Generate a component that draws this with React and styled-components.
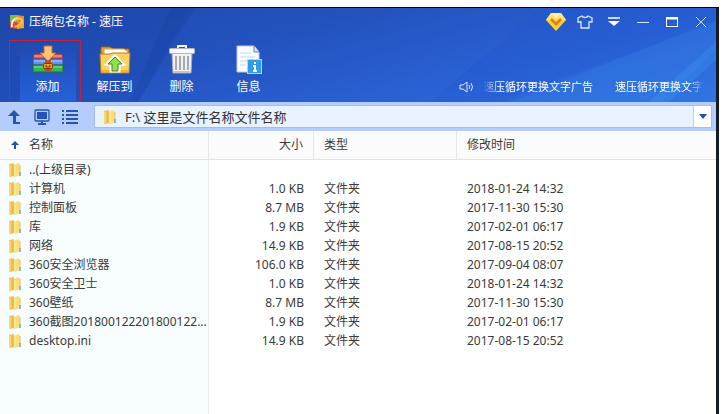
import styled, { createGlobalStyle } from "styled-components";

const files = [
  { name: "..(上级目录)" },
  { name: "计算机", size: "1.0 KB", type: "文件夹", date: "2018-01-24 14:32" },
  { name: "控制面板", size: "8.7 MB", type: "文件夹", date: "2017-11-30 15:30" },
  { name: "库", size: "1.9 KB", type: "文件夹", date: "2017-02-01 06:17" },
  { name: "网络", size: "14.9 KB", type: "文件夹", date: "2017-08-15 20:52" },
  { name: "360安全浏览器", size: "106.0 KB", type: "文件夹", date: "2017-09-04 08:07" },
  { name: "360安全卫士", size: "1.0 KB", type: "文件夹", date: "2018-01-24 14:32" },
  { name: "360壁纸", size: "8.7 MB", type: "文件夹", date: "2017-11-30 15:30" },
  { name: "360截图201800122201800122...", size: "1.9 KB", type: "文件夹", date: "2017-02-01 06:17" },
  { name: "desktop.ini", size: "14.9 KB", type: "文件夹", date: "2017-08-15 20:52" },
];

const AppLogo = () => (
  <svg width="16" height="16" viewBox="0 0 16 16">
    <path d="M1 1h7v7H1z" fill="#7fbf3c" />
    <path d="M8 1l7 1v6H8z" fill="#f08a24" />
    <path d="M1 8h7v7l-7-1z" fill="#e2502b" />
    <path d="M8 8h7v6l-7 1z" fill="#f4a92c" />
    <path d="M3 13c-1-5 1-8 6-9" fill="none" stroke="#e6f5f5" strokeWidth="2" />
    <path d="M6 6c4-3 8-1 7 2s-4 3-7 5" fill="none" stroke="#ffc65a" strokeWidth="2" />
    <path d="M6 8l4 1-3 3z" fill="#e2502b" />
  </svg>
);

const AddIcon = () => (
  <svg width="32" height="30" viewBox="0 0 32 30">
    <path d="M2 9h28l1 5H1z" fill="#e3564a" stroke="#a33443" />
    <path d="M1 14h30v6H1z" fill="#5f92f2" stroke="#2e54b0" />
    <path d="M1 20h30v7H1z" fill="#39b54c" stroke="#1a7434" />
    <path d="M2 11h28M2 16h28M2 22h28" stroke="#fff" strokeOpacity=".5" />
    <path d="M13 14h6v13h-6z" fill="#b4521a" />
    <rect x="11.500" y="18.500" width="9" height="5" rx="1" fill="#f09a2c" stroke="#87380d" />
    <path d="M14 20v2h4v-2" fill="none" stroke="#87380d" />
    <path d="M12 1h8v7h4l-8 8-8-8h4z" fill="#ffc477" stroke="#c76a2a" />
  </svg>
);

const ExtractIcon = () => (
  <svg width="32" height="30" viewBox="0 0 32 30">
    <path d="M2 8V2h9l3 2h16v7H2z" fill="#f0a420" stroke="#a5630f" />
    <path d="M5 4h20l4 3v4H5z" fill="#fff" stroke="#c9a25c" />
    <path d="M1 9h10l3-1h17l-1 20H2z" fill="#fbd262" stroke="#b57b13" />
    <path d="M3 26h26" stroke="#f5b233" strokeWidth="2" />
    <path d="M16 11l8 8h-4v7h-8v-7H8z" fill="#8be03e" stroke="#fff" strokeWidth="3" />
    <path d="M16 12l7 7h-4v7h-6v-7H9z" fill="#93e04a" stroke="#398b20" />
  </svg>
);

const TrashIcon = () => (
  <svg width="32" height="30" viewBox="0 0 32 30">
    <path d="M12 4V1h8v3" fill="none" stroke="#f4f4f4" strokeWidth="2" />
    <path d="M6 8h20l-1 20H7z" fill="#f1f1f1" stroke="#a7abb5" />
    <rect x="3.500" y="3.500" width="25" height="5" rx="1" fill="#f8f8f8" stroke="#b2b6c0" />
    <path d="M10 11v14M14 11v14M18 11v14M22 11v14" stroke="#a6a8ae" strokeWidth="2" />
    <path d="M8 27h16" stroke="#c5c5c5" strokeWidth="2" />
  </svg>
);

const InfoIcon = () => (
  <svg width="32" height="30" viewBox="0 0 32 30">
    <path d="M4 1h17l5 6v20H4z" fill="#fbfdff" stroke="#b9cae8" />
    <path d="M21 1v6h5" fill="#dbe5f5" stroke="#667faa" />
    <path d="M7 8h11M7 12h15M7 16h7M7 20h6" stroke="#c7d9ef" />
    <rect x="14.500" y="14.500" width="14" height="14" fill="#2f9cf2" stroke="#a9d8ff" />
    <path d="M22 17v2M20 21h2v5M20 26h4" fill="none" stroke="#fff" strokeWidth="2" />
  </svg>
);

const FolderIcon = () => (
  <svg width="14" height="16" viewBox="0 0 14 16">
    <path d="M1 2l5-1v13l-4 1-1-1z" fill="#efc552" />
    <path d="M5 3l6-2 1 2v10l-5 2-2-1z" fill="#f9df7c" />
    <path d="M2 3v11M7 4v10" stroke="#fbeaa0" />
    <path d="M5 3v11" stroke="#d8a93a" />
    <path d="M12 3v8" stroke="#e8bf4d" />
    <path d="M12 10v4" stroke="#8ab9d6" strokeWidth="2" />
  </svg>
);

const Diamond = () => (
  <svg width="22" height="20" viewBox="0 0 22 20">
    <path d="M6 1h10l5 7-10 11L1 8z" fill="#ffd22e" />
    <path d="M6 1h10l-5 6z" fill="#fff3b1" />
    <path d="M1 8l5-7 5 6zM21 8l-5-7-5 6z" fill="#ffe275" />
    <path d="M6 7l5 5 5-5" fill="none" stroke="#f1761b" strokeWidth="2.500" />
  </svg>
);

const Shirt = () => (
  <svg width="16" height="14" viewBox="0 0 16 14">
    <path d="M5 1L1 3v4h3v6h8V7h3V3l-4-2c-1 2-5 2-6 0z" fill="none" stroke="#dce8ff" strokeWidth="1.300" />
  </svg>
);

const MenuGlyph = () => (
  <svg width="14" height="10" viewBox="0 0 14 10">
    <path d="M1 1h12" stroke="#fff" strokeWidth="1.500" />
    <path d="M1 4h12L7 9z" fill="#fff" />
  </svg>
);

const Minimize = () => (
  <svg width="14" height="12" viewBox="0 0 14 12">
    <path d="M1 6.500h12" stroke="#dce8ff" />
  </svg>
);

const Maximize = () => (
  <svg width="14" height="12" viewBox="0 0 14 12">
    <rect x="1.500" y="1.500" width="11" height="9" fill="none" stroke="#fff" />
    <path d="M1 2.500h12" stroke="#fff" strokeWidth="2" />
  </svg>
);

const Close = () => (
  <svg width="12" height="12" viewBox="0 0 12 12">
    <path d="M1 1l10 10M11 1L1 11" stroke="#cfe0ff" />
  </svg>
);

const Speaker = () => (
  <svg width="16" height="12" viewBox="0 0 16 12">
    <path d="M1 4h3l4-3v10L4 8H1z" fill="none" stroke="#dce8ff" />
    <path d="M10 4q1.500 2 0 4M12 2q3 4 0 8" fill="none" stroke="#dce8ff" />
  </svg>
);

const UpArrow = () => (
  <svg width="14" height="16" viewBox="0 0 14 16">
    <path d="M7 1l6 6H9v6h4v2H6V7H1z" fill="#2454b4" />
  </svg>
);

const Monitor = () => (
  <svg width="16" height="16" viewBox="0 0 16 16">
    <rect x="1" y="1" width="14" height="11" rx="1" fill="none" stroke="#2454b4" strokeWidth="1.300" />
    <rect x="3" y="3" width="10" height="7" fill="#2454b4" />
    <path d="M8 12v2M4 15h8" stroke="#2454b4" strokeWidth="2" />
  </svg>
);

const ListGlyph = () => (
  <svg width="16" height="16" viewBox="0 0 16 16">
    <path d="M0 2h2M4 2h12M0 6h2M4 6h12M0 10h2M4 10h12M0 14h2M4 14h12" stroke="#2454b4" strokeWidth="2" />
  </svg>
);

const SortArrow = () => (
  <svg width="8" height="8" viewBox="0 0 8 8">
    <path d="M4 0l4 4H5v4H3V4H0z" fill="#1d4fb4" />
  </svg>
);

const Caret = () => (
  <svg width="8" height="5" viewBox="0 0 8 5">
    <path d="M0 0h8L4 5z" fill="#1d4fb4" />
  </svg>
);

const Streaks = () => (
  <StreakArt viewBox="0 0 715 94" preserveAspectRatio="none" aria-hidden="true">
    <path d="M0 0h190L138 94H0z" fill="#153b94" fillOpacity=".15" />
    <path d="M170 0h25L138 94h-8z" fill="#0f3590" fillOpacity=".15" />
    <path d="M715 0v15L560 70l-60 24H430L540 0z" fill="#1f50cb" fillOpacity=".2" />
    <path d="M715 12v30L660 94H510z" fill="#3a8df0" fillOpacity=".2" />
    <path d="M715 34v18L668 94h-20z" fill="#45b0ff" fillOpacity=".2" />
  </StreakArt>
);

const tools = [
  { label: "添加", icon: AddIcon, active: true },
  { label: "解压到", icon: ExtractIcon },
  { label: "删除", icon: TrashIcon },
  { label: "信息", icon: InfoIcon },
];

const App = () => {
  return (
    <>
      <GlobalStyle />
      <Page>
        <Window>
          <Banner>
            <Streaks />
            <TitleBar>
              <AppLogo />
              <h1>压缩包名称 - 速压</h1>
              <WindowButtons>
                <IconButton aria-label="会员"><Diamond /></IconButton>
                <IconButton aria-label="皮肤"><Shirt /></IconButton>
                <IconButton aria-label="菜单"><MenuGlyph /></IconButton>
                <IconButton aria-label="最小化"><Minimize /></IconButton>
                <IconButton aria-label="最大化"><Maximize /></IconButton>
                <IconButton aria-label="关闭"><Close /></IconButton>
              </WindowButtons>
            </TitleBar>
            <Toolbar>
              {tools.map(({ label, icon: Icon, active }) => (
                <Tool key={label} $active={active}>
                  <Icon />
                  <span>{label}</span>
                </Tool>
              ))}
              <Ads>
                <Speaker />
                <Ad href="#" $fade="left">速压循环更换文字广告</Ad>
                <Ad href="#" $fade="right">速压循环更换文字</Ad>
              </Ads>
            </Toolbar>
          </Banner>
          <PathBar>
            <NavButtons>
              <IconButton aria-label="向上"><UpArrow /></IconButton>
              <IconButton aria-label="计算机"><Monitor /></IconButton>
              <IconButton aria-label="列表"><ListGlyph /></IconButton>
            </NavButtons>
            <PathBox>
              <FolderIcon />
              <input aria-label="路径" defaultValue="F:\ 这里是文件名称文件名称" />
              <DropButton aria-label="展开"><Caret /></DropButton>
            </PathBox>
          </PathBar>
          <FileList>
            <FileTable>
              <colgroup>
                <col className="name" />
                <col className="size" />
                <col className="type" />
                <col />
              </colgroup>
              <thead>
                <tr>
                  <HeadCell><NameCell><SortArrow />名称</NameCell></HeadCell>
                  <HeadCell $right>大小</HeadCell>
                  <HeadCell>类型</HeadCell>
                  <HeadCell>修改时间</HeadCell>
                </tr>
              </thead>
              <tbody>
                {files.map((file) => (
                  <tr key={file.name}>
                    <Cell><NameCell><FolderIcon />{file.name}</NameCell></Cell>
                    <Cell $right>{file.size}</Cell>
                    <Cell>{file.type}</Cell>
                    <Cell>{file.date}</Cell>
                  </tr>
                ))}
              </tbody>
            </FileTable>
          </FileList>
        </Window>
      </Page>
    </>
  );
};

export default App;

const GlobalStyle = createGlobalStyle`
  * {
    box-sizing: border-box;
  }
  body {
    margin: 0;
    background: #fff;
    color: #3a3a3a;
    font-family: "Noto Sans", "Noto Sans CJK SC", sans-serif;
    font-size: 12px;
  }
  button {
    margin: 0;
    padding: 0;
    border: 0;
    background: none;
    color: inherit;
    font: inherit;
  }
  svg {
    display: block;
    flex: none;
  }
`;
const Page = styled.div`
  display: flex;
  min-height: 100vh;
  padding: 7px 4px 0 0;
`;
const Window = styled.main`
  flex: 1;
  min-width: 0;
  display: flex;
  flex-direction: column;
  border-top: 1px solid #000;
  border-right: 3px solid #141c2c;
`;
const Banner = styled.header`
  position: relative;
  background: linear-gradient(165deg, #2149ae 0%, #2352bd 35%, #2a62d6 70%, #3075e2 100%);
  color: #fff;
`;
const StreakArt = styled.svg`
  position: absolute;
  inset: 0;
  width: 100%;
  height: 100%;
`;
const TitleBar = styled.div`
  position: relative;
  display: flex;
  align-items: center;
  gap: 4px;
  height: 28px;
  padding: 0 4px 0 9px;
  > h1 {
    margin: 0;
    font-size: 12px;
    font-weight: 400;
    line-height: 16px;
  }
`;
const WindowButtons = styled.div`
  display: flex;
  gap: 6px;
  margin-left: auto;
`;
const IconButton = styled.button`
  display: flex;
  align-items: center;
  justify-content: center;
  width: 23px;
  height: 24px;
`;
const Toolbar = styled.div`
  position: relative;
  display: flex;
  height: 66px;
  padding-left: 14px;
`;
const Tool = styled.button`
  position: relative;
  display: flex;
  flex-direction: column;
  align-items: center;
  gap: 4px;
  width: 67px;
  padding-top: 9px;
  line-height: 16px;
  background: ${(props) =>
    props.$active
      ? "linear-gradient(to bottom, transparent 10%, rgba(40, 104, 230, 0.7)) center / 56px 100% no-repeat"
      : "none"};
  &::after {
    content: "";
    display: ${(props) => (props.$active ? "block" : "none")};
    position: absolute;
    inset: 4px 0 0 -5px;
    border: 1px solid #c3203c;
  }
`;
const Ads = styled.div`
  display: flex;
  align-items: center;
  align-self: flex-end;
  gap: 8px;
  height: 30px;
  margin-left: auto;
  padding-right: 13px;
`;
const Ad = styled.a`
  overflow: hidden;
  color: #fff;
  font-size: 11px;
  line-height: 16px;
  white-space: nowrap;
  text-decoration: none;
  mask-image: linear-gradient(to ${(props) => props.$fade}, #000 85%, transparent);
  & + & {
    margin-left: 14px;
  }
`;
const PathBar = styled.div`
  display: flex;
  align-items: center;
  height: 29px;
  padding-right: 4px;
  background: #b4cdfd;
`;
const NavButtons = styled.div`
  display: flex;
  gap: 5px;
  padding: 0 13px 0 2px;
`;
const PathBox = styled.div`
  flex: 1;
  display: flex;
  align-items: center;
  height: 23px;
  padding-left: 8px;
  border: 1px solid #a3bdf2;
  background: #e9f3ff;
  > input {
    flex: 1;
    min-width: 0;
    padding: 0 0 0 8px;
    border: 0;
    background: none;
    color: #333;
    font: inherit;
    font-size: 13px;
    outline: none;
  }
`;
const DropButton = styled.button`
  display: flex;
  align-items: center;
  justify-content: center;
  align-self: stretch;
  width: 18px;
  border-left: 1px solid #b4cdfd;
  background: #fff;
`;
const FileList = styled.section`
  flex: 1;
  background: linear-gradient(to right, #f8feff 208px, #ececec 208px, #ececec 209px, #fff 209px);
`;
const FileTable = styled.table`
  width: 100%;
  table-layout: fixed;
  border-collapse: separate;
  border-spacing: 0;
  .name {
    width: 209px;
  }
  .size {
    width: 105px;
  }
  .type {
    width: 143px;
  }
`;
const HeadCell = styled.th`
  height: 29px;
  padding: 0 10px;
  border-bottom: 1px solid #e3e3e3;
  border-right: 1px solid #e8e8e8;
  background: #fbfbfb;
  font-weight: 400;
  line-height: 18px;
  text-align: ${(props) => (props.$right ? "right" : "left")};
  &:first-child {
    padding: 0 0 0 9px;
  }
  &:last-child {
    border-right: 0;
  }
`;
const Cell = styled.td`
  height: 19px;
  padding: 0 10px;
  line-height: 18px;
  white-space: nowrap;
  text-align: ${(props) => (props.$right ? "right" : "left")};
  &:first-child {
    padding: 0 0 0 9px;
  }
`;
const NameCell = styled.div`
  display: grid;
  grid-template-columns: 12px auto;
  align-items: center;
  justify-content: start;
  justify-items: center;
  gap: 8px;
`;
